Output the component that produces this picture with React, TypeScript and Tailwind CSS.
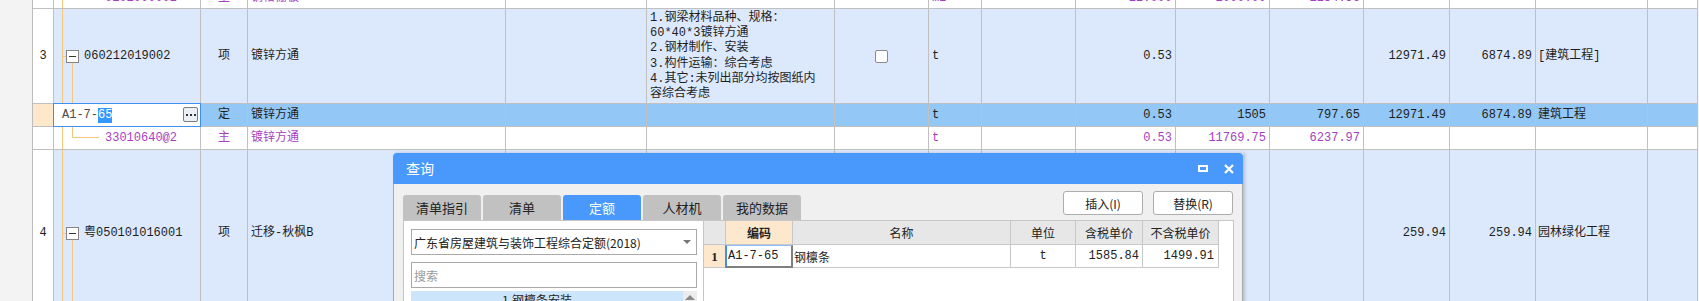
import React from "react";

const COLW = [
  "w-[21px]",
  "w-[147px]",
  "w-[47px]",
  "w-[258px]",
  "w-[141px]",
  "w-[188px]",
  "w-[94px]",
  "w-[53px]",
  "w-[94px]",
  "w-[100px]",
  "w-[94px]",
  "w-[94px]",
  "w-[86px]",
  "w-[86px]",
  "w-[112px]",
  "w-[50px]",
];

const ALIGN = [
  "justify-center",
  "",
  "justify-center",
  "pl-[3px]",
  "pl-[3px]",
  "pl-[3px]",
  "justify-center",
  "pl-[3px]",
  "justify-end pr-[3px]",
  "justify-end pr-[3px]",
  "justify-end pr-[3px]",
  "justify-end pr-[3px]",
  "justify-end pr-[3px]",
  "justify-end pr-[3px]",
  "pl-[2px]",
  "",
];

const VLine = () => <span className="absolute left-[8px] top-0 bottom-0 w-px bg-[#f7c67c]" />;

const MinusBox = () => (
  <span className="relative z-10 ml-[12px] flex h-[13px] w-[13px] shrink-0 items-center justify-center border border-[#858585] bg-white">
    <span className="h-px w-[7px] bg-[#333]" />
  </span>
);

const TreeCode = ({ text }: { text: string }) => (
  <>
    <VLine />
    <span className="absolute left-[8px] top-1/2 h-px w-[4px] bg-[#f7c67c]" />
    <span className="absolute left-[18px] top-[calc(50%+6px)] bottom-0 w-px bg-[#f7c67c]" />
    <MinusBox />
    <span className="ml-[5px]">{text}</span>
  </>
);

type RowProps = {
  h: string;
  bg: string;
  numBg?: string;
  text?: string;
  align?: string;
  cells: React.ReactNode[];
};

const Row = ({ h, bg, numBg = "bg-white", text = "text-[#1e1e1e]", align = "items-center", cells }: RowProps) => (
  <div className={`flex shrink-0 border-b border-[#c0c0c0] ${h} ${text}`}>
    {cells.map((c, i) => (
      <div
        key={i}
        className={`relative flex shrink-0 whitespace-nowrap border-r border-[#c0c0c0] ${align} ${COLW[i]} ${ALIGN[i]} ${i === 0 ? numBg : bg}`}
      >
        {c}
      </div>
    ))}
  </div>
);

const Editor = () => (
  <div className="absolute -left-px -top-px -right-px -bottom-px z-20 flex items-center border border-[#3d8ff1] bg-white pl-[8px]">
    <span className="text-[#4a4a4a]">A1-7-</span>
    <span className="bg-[#3399ff] text-white">65</span>
    <span className="absolute right-[2px] top-[3px] flex h-[15px] w-[15px] items-center justify-center gap-[2px] rounded-[2px] border border-[#7d7d7d] bg-[#eceff5]">
      <span className="h-[2px] w-[2px] bg-[#333]" />
      <span className="h-[2px] w-[2px] bg-[#333]" />
      <span className="h-[2px] w-[2px] bg-[#333]" />
    </span>
  </div>
);

const desc = [
  "1.钢梁材料品种、规格：",
  "60*40*3镀锌方通",
  "2.钢材制作、安装",
  "3.构件运输：综合考虑",
  "4.其它:未列出部分均按图纸内",
  "容综合考虑",
];

const Dialog = () => (
  <div className="absolute left-[393px] top-[153px] z-30 w-[850px] font-['Noto_Sans_CJK_SC',sans-serif] text-[12px] text-[#222] shadow-[2px_0_3px_rgba(0,0,0,0.18)]">
    <div className="flex h-[31px] items-center justify-between rounded-t-[4px] bg-[#4899fb] pl-[13px] pr-[9px] text-white">
      <span className="text-[14px]">查询</span>
      <div className="flex items-center gap-[16px]">
        <span className="h-[7px] w-[10px] border-2 border-white" />
        <svg width="10" height="10" viewBox="0 0 10 10">
          <path d="M1 1L9 9M9 1L1 9" stroke="white" strokeWidth="2.2" />
        </svg>
      </div>
    </div>
    <div className="h-[129px] border-x border-[#a9a9a9] bg-[#f0f0f0] pl-[9px] pt-[7px]">
      <div className="flex h-[29px] w-[831px] items-end justify-between">
        <div className="flex gap-[2px]">
          {["清单指引", "清单", "定额", "人材机", "我的数据"].map((t) => (
            <div
              key={t}
              className={`flex h-[25px] w-[78px] items-center justify-center rounded-t-[3px] text-[13px] ${
                t === "定额" ? "bg-[#4899fb] text-white" : "bg-[#c1c1c1] text-[#222]"
              }`}
            >
              {t}
            </div>
          ))}
        </div>
        <div className="flex gap-[10px] self-start pr-[1px]">
          <button className="h-[24px] w-[80px] rounded-[3px] border border-[#adadad] bg-white text-[12px]">插入(I)</button>
          <button className="h-[24px] w-[80px] rounded-[3px] border border-[#adadad] bg-white text-[12px]">替换(R)</button>
        </div>
      </div>
      <div className="flex h-[90px] w-[831px] border border-[#c6c6c6] bg-white">
        <div className="w-[300px] shrink-0 border-r border-[#c6c6c6] pl-[7px] pt-[8px]">
          <div className="flex h-[26px] w-[286px] items-center justify-between border border-[#a9a9a9] bg-white pl-[2px] pr-[5px]">
            <span>广东省房屋建筑与装饰工程综合定额(2018)</span>
            <span className="h-0 w-0 border-x-[4px] border-t-[4px] border-x-transparent border-t-[#777]" />
          </div>
          <div className="mt-[7px] flex h-[26px] w-[286px] items-center border border-[#a9a9a9] bg-white pl-[2px] text-[#9a9a9a]">
            搜索
          </div>
          <div className="mt-[3px] flex w-[286px]">
            <div className="flex h-[22px] w-[272px] items-start justify-center bg-[#cde5fa] pr-[20px] pt-[1px] text-[#222]">
              1.钢檩条安装
            </div>
            <div className="flex h-[22px] w-[14px] justify-center bg-[#ececec] pt-[4px]">
              <span className="h-0 w-0 border-x-[5px] border-b-[5px] border-x-transparent border-b-[#8a8a8a]" />
            </div>
          </div>
        </div>
        <div className="flex flex-col">
          <div className="flex h-[24px] border-b border-[#c8c8c8] bg-[#e7e7e7]">
            <div className="w-[22px] border-r border-[#c8c8c8]" />
            <div className="flex w-[67px] items-center justify-center border-r border-[#c8c8c8] bg-[#fde8ce] font-bold">编码</div>
            <div className="flex w-[218px] items-center justify-center border-r border-[#c8c8c8]">名称</div>
            <div className="flex w-[65px] items-center justify-center border-r border-[#c8c8c8]">单位</div>
            <div className="flex w-[67px] items-center justify-center border-r border-[#c8c8c8]">含税单价</div>
            <div className="flex w-[76px] items-center justify-center border-r border-[#c8c8c8]">不含税单价</div>
          </div>
          <div className="flex h-[23px] border-b border-[#c8c8c8]">
            <div className="flex w-[22px] items-center justify-center border-r border-[#c8c8c8] bg-[#fde8ce] font-['Liberation_Serif',serif] text-[13px] font-bold">
              1
            </div>
            <div className="relative w-[67px] border-r border-[#c8c8c8]">
              <div className="absolute -left-px top-0 -right-px -bottom-px flex items-center border-b-2 border-l-2 border-r-2 border-t border-b-[#7f7f7f] border-l-[#3f8ff0] border-r-[#7f7f7f] border-t-[#8fbdf5] bg-white pl-[1px] font-['Liberation_Mono',monospace]">
                A1-7-65
              </div>
            </div>
            <div className="flex w-[218px] items-center border-r border-[#c8c8c8] pl-[1px]">钢檩条</div>
            <div className="flex w-[65px] items-center justify-center border-r border-[#c8c8c8] font-['Liberation_Mono',monospace]">t</div>
            <div className="flex w-[67px] items-center justify-end border-r border-[#c8c8c8] pr-[3px] font-['Liberation_Mono',monospace]">
              1585.84
            </div>
            <div className="flex w-[76px] items-center justify-end border-r border-[#c8c8c8] pr-[4px] font-['Liberation_Mono',monospace]">
              1499.91
            </div>
          </div>
        </div>
      </div>
    </div>
  </div>
);

const App = () => {
  const top = (t: string) => <span className="-mt-[9px]">{t}</span>;

  return (
    <div className="relative flex h-[301px] w-[1699px] overflow-hidden bg-[#f3f3f3] font-['Liberation_Mono','Noto_Sans_CJK_SC',monospace] text-[12px] leading-[15px]">
      <div className="h-full w-[33px] shrink-0 border-r border-[#bdbdbd] bg-[#f3f3f3]" />
      <div className="flex flex-col bg-white">
        {/* partially visible row above */}
        <Row
          h="h-[9px]"
          bg="bg-white"
          text="text-[#a63fc4]"
          align="items-start"
          cells={[
            "",
            <>
              <VLine />
              <span className="-mt-[9px] pl-[51px]">0101000002</span>
            </>,
            top("主"),
            top("钢格栅板"),
            "",
            "",
            "",
            top("m2"),
            "",
            top("12.000"),
            top("1000.00"),
            top("1234.56"),
            "",
            "",
            "",
            "",
          ]}
        />

        {/* 清单 3 */}
        <Row
          h="h-[95px]"
          bg="bg-[#dce9fc]"
          cells={[
            "3",
            <TreeCode text="060212019002" />,
            "项",
            "镀锌方通",
            "",
            <div className="self-start pt-[2px] leading-[15.2px]">
              {desc.map((l) => (
                <div key={l}>{l}</div>
              ))}
            </div>,
            <span className="h-[13px] w-[13px] rounded-[2px] border border-[#8a8a8a] bg-white" />,
            "t",
            "",
            "0.53",
            "",
            "",
            "12971.49",
            "6874.89",
            "[建筑工程]",
            "",
          ]}
        />

        {/* 定额 row being edited */}
        <Row
          h="h-[23px]"
          bg="bg-[#93c7f5]"
          numBg="bg-[#fde8cc]"
          cells={[
            "",
            <Editor />,
            "定",
            "镀锌方通",
            "",
            "",
            "",
            "t",
            "",
            "0.53",
            "1505",
            "797.65",
            "12971.49",
            "6874.89",
            "建筑工程",
            "",
          ]}
        />

        {/* 主材 */}
        <Row
          h="h-[23px]"
          bg="bg-white"
          text="text-[#a63fc4]"
          cells={[
            "",
            <>
              <VLine />
              <span className="absolute left-[18px] top-0 h-[11px] w-px bg-[#f7c67c]" />
              <span className="absolute left-[18px] top-[10px] h-px w-[27px] bg-[#f7c67c]" />
              <span className="pl-[51px]">33010640@2</span>
            </>,
            "主",
            "镀锌方通",
            "",
            "",
            "",
            "t",
            "",
            "0.53",
            "11769.75",
            "6237.97",
            "",
            "",
            "",
            "",
          ]}
        />

        {/* 清单 4 */}
        <Row
          h="h-[167px]"
          bg="bg-[#dce9fc]"
          cells={[
            "4",
            <TreeCode text="粤050101016001" />,
            "项",
            "迁移-秋枫B",
            "",
            "",
            "",
            "",
            "",
            "",
            "",
            "",
            "259.94",
            "259.94",
            "园林绿化工程",
            "",
          ]}
        />
      </div>

      <Dialog />
    </div>
  );
};

export default App;
